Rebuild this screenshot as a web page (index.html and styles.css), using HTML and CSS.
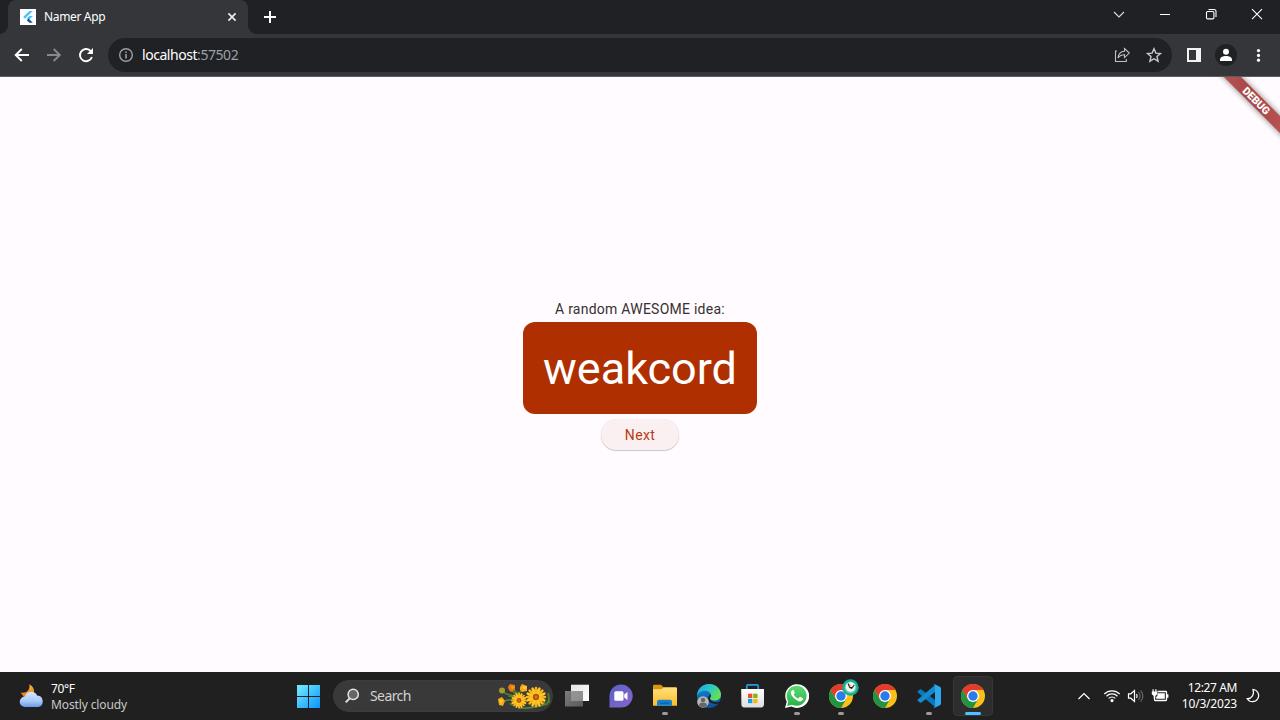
FILE: index.html
```html
<!DOCTYPE html>
<html lang="en">
<head>
<meta charset="utf-8">
<title>Namer App</title>
<link rel="stylesheet" href="styles.css">
</head>
<body>
<svg class="defs" aria-hidden="true">
  <defs>
    <linearGradient id="win" gradientUnits="userSpaceOnUse" x1="0" y1="0" x2="24" y2="24"><stop offset="0" stop-color="#7af3ff"/><stop offset="1" stop-color="#0a93fb"/></linearGradient>
    <linearGradient id="cloud" x1="0" y1="0" x2="0" y2="1"><stop offset="0" stop-color="#d5e6fd"/><stop offset=".6" stop-color="#a9cbfa"/><stop offset="1" stop-color="#6799ed"/></linearGradient>
    <linearGradient id="moon" x1="0" y1="0" x2="0" y2="1"><stop offset="0" stop-color="#f9b43a"/><stop offset="1" stop-color="#e87d12"/></linearGradient>
    <linearGradient id="chat" x1="0" y1="0" x2="1" y2="1"><stop offset="0" stop-color="#5664cf"/><stop offset="1" stop-color="#8a63c6"/></linearGradient>
    <linearGradient id="folder" x1="0" y1="0" x2="0" y2="1"><stop offset="0" stop-color="#ffe07c"/><stop offset="1" stop-color="#fcbb25"/></linearGradient>
    <linearGradient id="edge1" x1="0" y1="0" x2="1" y2=".5"><stop offset="0" stop-color="#249fe3"/><stop offset=".5" stop-color="#29c4cf"/><stop offset="1" stop-color="#65e052"/></linearGradient>
    <linearGradient id="edge2" x1="0" y1="0" x2="0" y2="1"><stop offset="0" stop-color="#168bd8"/><stop offset="1" stop-color="#0c4f9c"/></linearGradient>
    <linearGradient id="store" x1="0" y1="0" x2="0" y2="1"><stop offset="0" stop-color="#fff"/><stop offset="1" stop-color="#dedede"/></linearGradient>
    <linearGradient id="tv" x1="0" y1="0" x2="1" y2="1"><stop offset="0" stop-color="#e4e4e4"/><stop offset="1" stop-color="#fff"/></linearGradient>
    <linearGradient id="tv2" x1="0" y1="0" x2="1" y2="1"><stop offset="0" stop-color="#7d7d7d"/><stop offset="1" stop-color="#5a5a5a"/></linearGradient>
    <linearGradient id="wa" x1="0" y1="0" x2="0" y2="1"><stop offset="0" stop-color="#5fdb72"/><stop offset="1" stop-color="#28b146"/></linearGradient>
    <linearGradient id="band" x1="0" y1="0" x2="1" y2="0"><stop offset="0" stop-color="#b55252"/><stop offset=".5" stop-color="#a94646"/><stop offset="1" stop-color="#b55151"/></linearGradient>
    <filter id="soft" x="-50%" y="-50%" width="200%" height="200%"><feGaussianBlur stdDeviation="3"/></filter>
    <symbol id="chrome" viewBox="0 0 24 24">
      <circle cx="12" cy="12" r="12" fill="#fbc116"/>
      <path d="M1.6 6A12 12 0 0 1 22.4 6H12L6.8 15Z" fill="#e33b2e"/>
      <path d="M1.6 6A12 12 0 0 0 12 24L17.2 15 12 12 6.8 15Z" fill="#229342"/>
      <circle cx="12" cy="12" r="6" fill="#fff"/><circle cx="12" cy="12" r="4.7" fill="#2b7bec"/>
    </symbol>
    <symbol id="flower" viewBox="-10 -10 20 20">
      <circle r="7.2" fill="#e89a0a"/>
      <g stroke="#fbb416" stroke-width="2.3" stroke-linecap="round"><path d="M0-8.2V8.2M-8.2 0H8.2M-5.8-5.8 5.8 5.8M-5.8 5.8 5.8-5.8"/><path stroke="#ffc62e" d="M-3.1-7.6 3.1 7.6M3.1-7.6-3.1 7.6M-7.6-3.1 7.6 3.1M-7.6 3.1 7.6-3.1"/></g>
      <circle r="2.9" fill="#b4560a"/><circle r="1.2" fill="#d77a14"/>
    </symbol>
  </defs>
</svg>

<header class="tabstrip">
  <div class="tab">
    <svg class="favicon" width="16" height="16"><path fill="#fff" d="M0 0h16v16H0z"/><path d="M9.3 2h3.5L5 9.7 3.2 8z" fill="#47c5fb"/><path d="M9.3 7.1h3.5L8.6 11.2 6.8 9.5z" fill="#47c5fb"/><path d="m6.8 11.2 1.8-1.8 4.2 4.4H9.3z" fill="#075b9d"/></svg>
    <span class="tab-title">Namer App</span>
    <svg class="tab-close" width="16" height="16"><path d="m4.4 4.4 7.2 7.2m0-7.2-7.2 7.2" stroke="#e8eaed" stroke-width="1.7"/></svg>
  </div>
  <svg class="new-tab" width="28" height="28"><path d="M14 8v12M8 14h12" stroke="#fff" stroke-width="2"/></svg>
  <div class="window-buttons">
    <svg width="46" height="28"><path d="m18 12 5 5 5-5" fill="none" stroke="#ddd" stroke-width="1.1"/></svg>
    <svg width="46" height="28"><path d="M18 14.5h10" stroke="#fff"/></svg>
    <svg width="46" height="28" fill="none" stroke="#fff" stroke-width="1.1"><rect x="18.5" y="11.5" width="7.4" height="7.4" rx="1.2"/><path d="M20.5 9.5H26a2 2 0 0 1 2 2V17"/></svg>
    <svg width="46" height="28"><path d="m18 9.2 10 10m0-10-10 10" stroke="#fff" stroke-width="1.1"/></svg>
  </div>
</header>

<nav class="toolbar">
  <svg class="nav" width="32" height="32"><path d="M23 16H10m5.8-6L9.7 16l6.1 6" fill="none" stroke="#fff" stroke-width="1.9"/></svg>
  <svg class="nav" width="32" height="32"><path d="M9 16h12.5M15.7 10l6.1 6-6.1 6" fill="none" stroke="#86888a" stroke-width="1.9"/></svg>
  <svg class="nav" width="32" height="32"><path d="M21.9 18A6.1 6.1 0 1 1 20.3 11.7l1.2 1.3" fill="none" stroke="#fff" stroke-width="1.9"/><path d="M23 9v6h-6z" fill="#fff"/></svg>
  <div class="omnibox">
    <svg width="16" height="16"><circle cx="8" cy="8" r="6.3" fill="none" stroke="#9aa0a6" stroke-width="1.4"/><path d="M8 7v4.5M8 4.4V6" stroke="#9aa0a6" stroke-width="1.6"/></svg>
    <span class="url">localhost<span class="port">:57502</span></span>
    <svg class="share" width="32" height="32" fill="none" stroke="#bdc1c6" stroke-width="1.1"><path d="M11 12H9.5v10.5h10.8V20"/><path d="M12 19c.5-4.6 3.2-6.5 6.5-6.7V9.5l4.8 4.6-4.8 4.5v-2.8c-2.8 0-4.8.7-6.5 3.2z"/></svg>
    <svg width="32" height="32"><path d="m16 9.8 1.9 4.3 4.6.4-3.5 3.1 1.1 4.6-4.1-2.5-4.1 2.5 1.1-4.6-3.5-3.1 4.6-.4z" fill="none" stroke="#c7cacf" stroke-width="1.4"/></svg>
  </div>
  <svg class="panel" width="32" height="32"><path d="M9 9h14v14H9zm2 2v10h7V11z" fill="#f1f3f4" fill-rule="evenodd"/></svg>
  <svg width="32" height="32"><circle cx="16" cy="16" r="11" fill="#202124"/><circle cx="16" cy="12.8" r="3" fill="#fff"/><path d="M10 22v-1.5c0-2.4 3.2-3.5 6-3.5s6 1.1 6 3.5V22z" fill="#fff"/></svg>
  <svg width="33" height="32" fill="#fff"><circle cx="16.5" cy="11.6" r="1.6"/><circle cx="16.5" cy="16.4" r="1.6"/><circle cx="16.5" cy="21.2" r="1.6"/></svg>
</nav>

<main class="page">
  <svg class="debug" width="80" height="80"><path d="M14-10 90 66V49L31-10z" filter="url(#soft)" opacity=".5"/><path d="M24 0h17l39 39v17z" fill="url(#band)"/><text x="56.2" y="27.5" transform="rotate(45 56.2 24)">DEBUG</text></svg>
  <p class="caption">A random AWESOME idea:</p>
  <div class="card">weakcord</div>
  <button class="next">Next</button>
</main>

<footer class="taskbar">
  <div class="weather">
    <svg width="26" height="26"><path d="M10.3 1.3C15.5 4 17 10 12 14H5L1.5 9.5C7.5 11 11.5 7 10.3 1.3z" fill="url(#moon)"/><path d="M6 24a5.2 5.2 0 0 1-.2-10.4 6.6 6.6 0 0 1 12.3-1A5.8 5.8 0 0 1 19.4 24z" fill="url(#cloud)"/></svg>
    <div class="forecast"><span class="temp">70°F</span><span class="sky">Mostly cloudy</span></div>
  </div>
  <div class="apps">
    <div class="app"><svg width="24" height="24" fill="url(#win)"><path d="M1 1h11v11H1zM13 1h11v11H13zM1 13h11v11H1zM13 13h11v11H13z"/></svg></div>
    <div class="search">
      <svg width="18" height="18"><circle cx="9.2" cy="7.4" r="5.1" fill="#666" stroke="#e4e4e4" stroke-width="1.5"/><path d="m5.5 11.5-3.8 3.8" stroke="#e4e4e4" stroke-width="1.8"/></svg>
      <span class="search-label">Search</span>
      <svg class="bouquet" width="54" height="28"><path d="M5 9q4 4 13 5M7 19q8-2 9-1M21 14l-7-6M21 12l5-5M22 26q12 1 28-4 3-5 1-11M47 23q-1-5 0-9" fill="none" stroke="#4f8a30" stroke-width="1.5"/><path d="m19 13-3-6 6 4zM11 15l6 0-3-3zM51 21l1-9 1 9zM46 22l1-6 2 7zM12 22l5-3-1 5z" fill="#48852d"/><circle cx="5" cy="8.5" r="3" fill="#9f9a2b"/><path d="m11 5 2-3 5 1 0 5-4 2-2-2z" fill="#e87a10"/><path d="m14 4 4 1-3 2z" fill="#f9a520"/><path d="m23 5 2-3 5 2 0 5-5 1-2-2z" fill="#f7a71a"/><path d="m25 5 5-1-2 4z" fill="#ffd03c"/><path d="m1 17 4-2 3 4-2 5-4-1z" fill="#f9a816"/><path d="m2 18 4 0-2 4z" fill="#ffcb33"/><use href="#flower" x="12.5" y="10" width="19" height="17"/><use href="#flower" x="28" y="4" width="22" height="22"/></svg>
    </div>
    <div class="app task-view"><svg width="24" height="24"><path d="M6 .7h18v16.3H6z" fill="url(#tv)"/><path d="M0 7h18v15.5H0z" fill="url(#tv2)"/><path d="M6 7h12v10H6z" fill="#aaa" opacity=".6"/></svg></div>
    <div class="app"><svg width="24" height="24"><path d="M.5 23.5V12A11.6 11.5 0 1 1 12 23.5z" fill="url(#chat)"/><rect x="5.3" y="7.2" width="9.2" height="9.6" rx="1.5" fill="#fff"/><path d="m15.2 10.6 3.3-2.7v8.2l-3.3-2.7z" fill="#fff"/></svg></div>
    <div class="app running"><svg width="26" height="24"><path d="M1 2q0-1.2 1.2-1.2H9l2.5 2.5h12.3q1.2 0 1.2 1.2V12H1z" fill="#d9950b"/><path d="M1 5.2h8.5l2-1.7h12.3q1.2 0 1.2 1.2v17H1z" fill="url(#folder)"/><path d="M5 21.7v-4q0-2 2-2h11q2 0 2 2v4z" fill="#1582cf"/><path d="M8 18.5h9v1.3H8z" fill="#0960a6"/></svg></div>
    <div class="app"><svg width="24" height="24"><circle cx="12" cy="12" r="12" fill="url(#edge2)"/><path d="M0 12C0 5 5.5 0 12 0s12 4.7 12 10.6c0 4.4-3.6 6-6.7 6-2.5 0-4.4-1-4.4-2 0-.8 1.2-1.3 1.2-3.3 0-2.7-2.7-4.6-6-4.6C3.8 6.7.6 9.3 0 12z" fill="url(#edge1)"/><path d="M13 14.3c0 3 4.7 4.7 9.5 3.5l1.5-1.8v2l-1.6 1.6C16 20.8 11 18.5 11 14.8c0-2.4 1.4-4 2.8-4.5.7 2-.8 2.7-.8 4z" fill="#202020"/><circle cx="6" cy="18" r="5.8" fill="#b9b9b9"/><circle cx="6" cy="16" r="2.3" fill="#666"/><path d="M2 21.6q0-3 4-3t4 3q-4 3.8-8 0z" fill="#666"/></svg></div>
    <div class="app"><svg width="24" height="24"><path d="M5.8 5V2.2Q5.8.8 7.2.8h8.6q1.4 0 1.4 1.4V5" fill="none" stroke="#209ce4" stroke-width="1.7"/><path d="M.2 5h22.8v15.6q0 2.8-2.8 2.8h-17q-2.8 0-2.8-2.8z" fill="url(#store)"/><path d="M7 9.7h4.3V14H7z" fill="#ef4f28"/><path d="M12.2 9.7h4.3V14h-4.3z" fill="#7cb811"/><path d="M7 14.9h4.3v4.3H7z" fill="#0ba1ed"/><path d="M12.2 14.9h4.3v4.3h-4.3z" fill="#f9b707"/></svg></div>
    <div class="app running"><svg width="24" height="24"><path d="m0 24 1.7-6.2A12 11.9 0 1 1 6.3 22.4z" fill="#fff"/><path d="m2.1 21.9 1.2-4.5A10 10 0 1 1 7 20.7z" fill="url(#wa)"/><path d="M8.8 6.4c-.5-1-1.2-.8-1.9 0-2.4 2.7.2 6 2.6 8.2 3 2.7 6.2 4 8.2 1.5 1-1.3.6-1.7-.2-2.2l-2-1c-.6-.3-.9 0-1.3.5-.8 1-1 1-2 .5-1.6-.8-2.7-2-3.3-3.2-.2-.6.5-.9.8-1.7.2-.4-.3-1.2-.9-2.6z" fill="#fff"/></svg></div>
    <div class="app running badged"><svg width="24" height="24"><use href="#chrome"/></svg><svg class="badge" width="17" height="17"><circle cx="8.5" cy="8.5" r="8.2" fill="#0fae90"/><circle cx="8.5" cy="8.5" r="6" fill="#5fd0b8"/><circle cx="8.5" cy="8" r="4.8" fill="#f6f6ee"/><path d="m5.5 4.5 1.5 0 1 3.5h2L12 5.5l.5 1L10 10 7.3 9z" fill="#222"/><path d="M8 6h1.5v1.5H8z" fill="#e6b35a"/></svg></div>
    <div class="app"><svg width="24" height="24"><use href="#chrome"/></svg></div>
    <div class="app running"><svg width="24" height="24"><path d="m1 7 1.8-1.5q.8-.5 1.6.1L18 16v7L.8 8.5Q0 7.7 1 7z" fill="#0879bd"/><path d="m1 17 1.8 1.5q.8.5 1.6-.1L18 8V1L.8 15.5Q0 16.3 1 17z" fill="#128bd1"/><path d="m17.5.2 5.4 2.5q1.1.5 1.1 1.7v15.2q0 1.2-1.1 1.7l-5.4 2.5q-.6.2-1-.3l1.5-1V1.5l-1.5-1q.4-.5 1-.3z" fill="#2da8ee"/></svg></div>
    <div class="app active"><svg width="24" height="24"><use href="#chrome"/></svg></div>
  </div>
  <div class="tray">
    <svg class="overflow" width="28" height="24"><path d="m8.5 15 5.5-5.5 5.5 5.5" fill="none" stroke="#fff" stroke-width="1.2"/></svg>
    <svg width="24" height="24" fill="none" stroke="#fff" stroke-width="1.25"><path d="M4.3 10a10.9 10.9 0 0 1 15.4 0M6.5 12.2a7.8 7.8 0 0 1 11 0M8.7 14.4a4.7 4.7 0 0 1 6.6 0"/><circle cx="12" cy="16.5" r="1" fill="#fff"/></svg>
    <svg width="24" height="24" fill="none" stroke="#fff" stroke-width="1.2"><path d="M4.5 9.8h2.3l3.7-3.2v10.8l-3.7-3.2H4.5z"/><path d="M12.5 10q1.4 2 0 4"/><path stroke="#666" d="M14.5 8q3.2 4 0 8M16.6 6.4q4.6 5.6 0 11.2"/></svg>
    <svg width="24" height="24"><path d="M9.5 7.5h8.3q.7 0 .7.7v7.6q0 .7-.7.7H7.2q-.7 0-.7-.7V13" fill="none" stroke="#fff" stroke-width="1.3"/><path d="M9.5 9.2h7.3v5.6H8.2V13l1.3-1.4zM19 10.2h1.4v3.6H19zM3.8 7.5h5.4v2.8L7.3 12v2H5.7v-2l-1.9-1.7zM4.5 5.2h1.2v2.5H4.5zM7.3 5.2h1.2v2.5H7.3z" fill="#fff"/></svg>
    <div class="clock"><span class="time">12:27 AM</span><span class="date">10/3/2023</span></div>
    <svg width="32" height="24"><path d="M16 5.5a6.1 6.1 0 1 1-5.7 9.2C14.3 15 17.8 10.5 16 5.5z" fill="none" stroke="#fff" stroke-width="1.2"/></svg>
  </div>
</footer>
</body>
</html>
```
FILE: styles.css
```css
* { box-sizing: border-box; }
body {
  margin: 0; width: 1280px; height: 720px; overflow: hidden;
  display: flex; flex-direction: column; background: #fffbff;
  font-family: "Noto Sans", "Open Sans", sans-serif;
}
svg { display: block; flex: none; }
.defs { position: absolute; width: 0; height: 0; }

.tabstrip { height: 34px; background: #202124; display: flex; padding-left: 8px; }
.tab {
  position: relative; width: 240px; height: 34px; padding: 0 8px 0 12px;
  display: flex; align-items: center; background: #35363a; border-radius: 8px 8px 0 0;
}
.tab::before, .tab::after {
  content: ""; position: absolute; bottom: 0; width: 8px; height: 8px;
}
.tab::before { left: -8px; background: radial-gradient(circle at 0 0, transparent 7.5px, #35363a 8px); }
.tab::after { right: -8px; background: radial-gradient(circle at 100% 0, transparent 7.5px, #35363a 8px); }
.tab-title { margin-left: 8px; font-size: 12px; line-height: 16px; color: #fff; letter-spacing: -.35px; }
.tab-close { margin-left: auto; }
.new-tab { margin: 3px 0 0 8px; }
.window-buttons { margin-left: auto; display: flex; }

.toolbar {
  height: 43px; padding: 0 5px 1px 6px; display: flex; align-items: center;
  background: #35363a; border-bottom: 1px solid #5c5d60;
}
.omnibox {
  width: 1064px; height: 34px; margin-left: 6px; padding: 0 2px 0 10px;
  display: flex; align-items: center; border-radius: 17px; background: #202124;
}
.url { margin-left: 8px; color: #fff; font-size: 14px; line-height: 20px; letter-spacing: -.45px; }
.port { color: #9aa0a6; }
.share { margin-left: auto; }
.panel { margin-left: 6px; }

.page {
  position: relative; height: 595px; padding-top: 222px; overflow: hidden;
  display: flex; flex-direction: column; align-items: center;
  background: #fffbff; font-family: Roboto, sans-serif;
}
.debug { position: absolute; top: 0; right: 0; }
.debug text { font: 900 10.6px Roboto, sans-serif; fill: #fff; text-anchor: middle; }
.caption { margin: 0; font-size: 14px; line-height: 20px; letter-spacing: .25px; color: #37312f; }
.card {
  width: 234px; height: 92px; margin-top: 3.4px; border-radius: 12px;
  background: #b02f00; color: #fff; font-size: 45px; line-height: 93px; text-align: center;
}
.next {
  width: 78px; height: 31px; margin-top: 4.6px; padding: 1px 0 0; border: 0; border-radius: 16px;
  background: #faf0f1; color: #b83c12; box-shadow: 0 1px 1px rgba(0,0,0,.2), 0 0 1px rgba(0,0,0,.1);
  font: 400 14px/30px Roboto, sans-serif; letter-spacing: .35px;
}

.taskbar { height: 48px; background: #202020; display: flex; color: #fff; }
.weather { width: 286px; padding-left: 19px; display: flex; align-items: center; }
.forecast { margin-left: 6px; display: flex; flex-direction: column; font-size: 12px; line-height: 16px; padding-top: 2px; }
.temp { letter-spacing: -.4px; }
.sky { color: #c8c8c8; letter-spacing: -.12px; }
.apps { display: flex; align-items: center; }
.app { position: relative; width: 44px; height: 48px; display: flex; align-items: center; justify-content: center; }
.search {
  width: 220px; height: 32px; margin: 0 2px 0 3px; padding: 0 0 0 10px;
  display: flex; align-items: center; border-radius: 16px; background: #393939; border: 1px solid #3d3d3d;
}
.search-label { margin-left: 8px; font-size: 14px; line-height: 20px; letter-spacing: -.6px; color: #d2d2d2; }
.bouquet { margin: 0 1px 0 auto; }
.running::after, .active::after {
  content: ""; position: absolute; bottom: 5px; left: 19px; width: 6px; height: 3px;
  border-radius: 2px; background: #9a9a9a;
}
.active::before {
  content: ""; position: absolute; inset: 4px 2px; border: 1px solid #373737;
  border-radius: 4px; background: #2d2d2d;
}
.active svg { position: relative; }
.active::after { left: 14px; width: 16px; background: #4cc2ff; }
.app .badge { position: absolute; left: 22.5px; top: 7px; }
.tray { margin-left: auto; padding-right: 11px; display: flex; align-items: center; }
.overflow { margin-right: 2px; }
.clock { width: 65px; display: flex; flex-direction: column; align-items: flex-end; font-size: 12px; line-height: 16px; }
.time { letter-spacing: -.4px; }
.date { letter-spacing: -.2px; }
```
